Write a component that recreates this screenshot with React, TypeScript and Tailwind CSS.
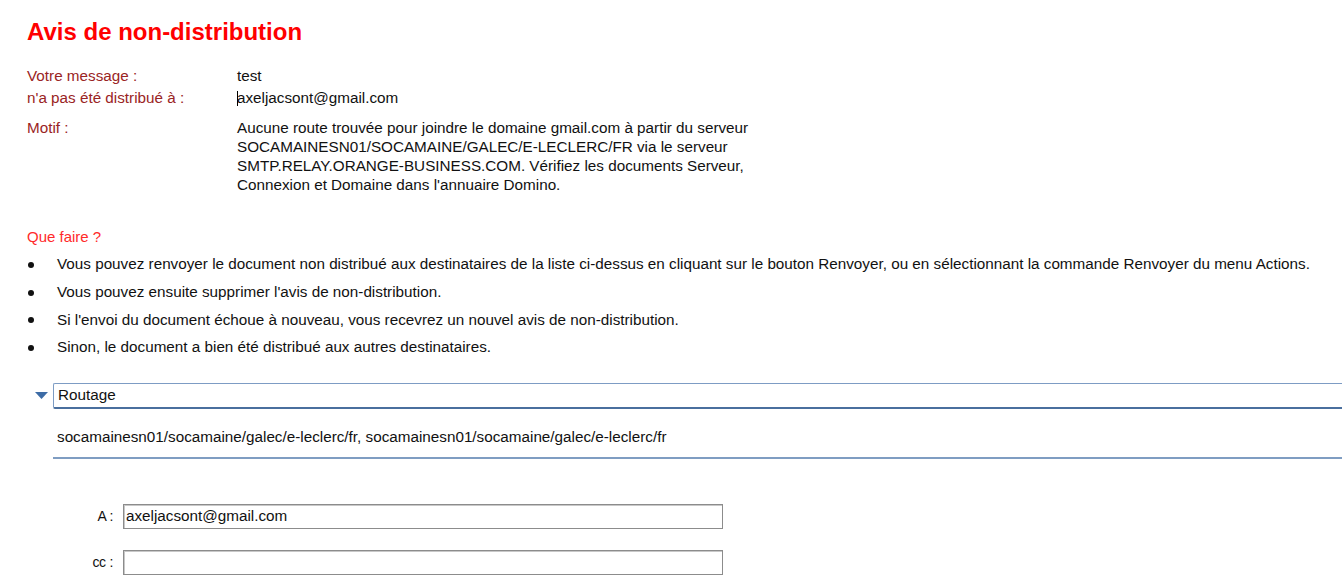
import React from "react";

const bullets = [
  "Vous pouvez renvoyer le document non distribué aux destinataires de la liste ci-dessus en cliquant sur le bouton Renvoyer, ou en sélectionnant la commande Renvoyer du menu Actions.",
  "Vous pouvez ensuite supprimer l'avis de non-distribution.",
  "Si l'envoi du document échoue à nouveau, vous recevrez un nouvel avis de non-distribution.",
  "Sinon, le document a bien été distribué aux autres destinataires.",
];

export default function App() {
  return (
    <div
      className="w-[1342px] h-[587px] overflow-hidden bg-white text-[15.25px] text-[#111]"
      style={{ fontFamily: '"Liberation Sans", Arial, sans-serif' }}
    >
      <div className="pl-[27px]">
        <h1 className="mt-[16px] text-[24px] leading-[32px] font-bold text-[#ff0000]">
          Avis de non-distribution
        </h1>

        <div className="mt-[17px] grid grid-cols-[210px_1fr] leading-[22px]">
          <div className="text-[#9a2424]">Votre message :</div>
          <div>test</div>
          <div className="text-[#9a2424]">n'a pas été distribué à :</div>
          <div className="flex items-center">
            <span className="inline-block w-px h-[15px] bg-black mr-[-1px]" />
            <span>axeljacsont@gmail.com</span>
          </div>
        </div>

        <div className="mt-[9px] grid grid-cols-[210px_1fr] leading-[19px]">
          <div className="text-[#9a2424]">Motif :</div>
          <div>
            Aucune route trouvée pour joindre le domaine gmail.com à partir du serveur
            <br />
            SOCAMAINESN01/SOCAMAINE/GALEC/E-LECLERC/FR via le serveur
            <br />
            SMTP.RELAY.ORANGE-BUSINESS.COM. Vérifiez les documents Serveur,
            <br />
            Connexion et Domaine dans l'annuaire Domino.
          </div>
        </div>

        <div className="mt-[33px] leading-[20px] text-[15px] text-[#ff2a2a]">Que faire ?</div>
      </div>

      <ul className="mt-[4px] pl-[27px]">
        {bullets.map((b) => (
          <li key={b} className="flex items-center h-[27.7px]">
            <span className="w-[30px] flex">
              <span className="w-[6px] h-[6px] rounded-full bg-[#111] ml-[1px]" />
            </span>
            <span className="whitespace-nowrap">{b}</span>
          </li>
        ))}
      </ul>

      <div className="mt-[21px] flex items-center">
        <div className="w-[53px] flex justify-end pr-[5px]">
          <svg width="13" height="8" viewBox="0 0 13 8">
            <polygon points="0,0 13,0 6.5,7" fill="#3d6ca6" />
          </svg>
        </div>
        <div className="flex-1 h-[26px] flex items-center pl-[4px] border-l border-t border-[#7d9cc4] border-b-2 border-b-[#4a6f9e] rounded-tl-[2px] rounded-bl-[2px]">
          Routage
        </div>
      </div>

      <div className="ml-[53px] h-[50px] pt-[16px] leading-[24px] pl-[4px] border-b-2 border-[#7f9dc2]">
        socamainesn01/socamaine/galec/e-leclerc/fr, socamainesn01/socamaine/galec/e-leclerc/fr
      </div>

      <div className="mt-[45px] flex flex-col gap-[21px]">
        <div className="flex items-center">
          <div className="w-[113px] text-right text-[14px] tracking-[-0.3px]">A :</div>
          <div className="ml-[10px] w-[600px] h-[25px] border border-[#8c8c8c] shadow-[inset_1px_1px_0_#c8c8c8] flex items-center pl-[2px]">
            axeljacsont@gmail.com
          </div>
        </div>
        <div className="flex items-center">
          <div className="w-[113px] text-right text-[14px] tracking-[-0.3px]">cc :</div>
          <div className="ml-[10px] w-[600px] h-[25px] border border-[#8c8c8c] shadow-[inset_1px_1px_0_#c8c8c8]" />
        </div>
      </div>
    </div>
  );
}
